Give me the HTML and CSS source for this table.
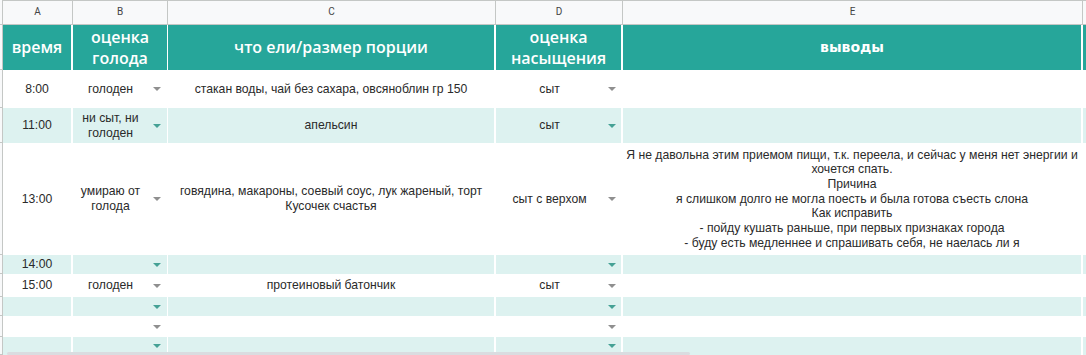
FILE: index.html
```html
<!DOCTYPE html>
<html lang="ru">
<head>
<meta charset="utf-8">
<title>Дневник питания</title>
<link rel="stylesheet" href="styles.css">
</head>
<body>
<div class="sheet">
  <div class="grid">
    <div class="row">
      <div class="rh"></div>
      <div class="ch">A</div>
      <div class="ch">B</div>
      <div class="ch">C</div>
      <div class="ch">D</div>
      <div class="ch">E</div>
      <div class="ch ch-f"></div>
    </div>
    <div class="row">
      <div class="rh"></div>
      <div class="hd">время</div>
      <div class="hd hd-b">оценка<br>голода</div>
      <div class="hd">что ели/размер порции</div>
      <div class="hd">оценка<br>насыщения</div>
      <div class="hd hd-e">выводы</div>
      <div class="hd hd-f"></div>
    </div>

    <div class="row">
      <div class="rh"></div>
      <div class="c">8:00</div>
      <div class="c c-b"><span class="t">голоден</span><span class="dd"><svg viewBox="0 0 8 4"><path d="M0 0H8L4 4Z"/></svg></span></div>
      <div class="c">стакан воды, чай без сахара, овсяноблин гр 150</div>
      <div class="c c-d"><span class="t">сыт</span><span class="dd"><svg viewBox="0 0 8 4"><path d="M0 0H8L4 4Z"/></svg></span></div>
      <div class="c"></div>
      <div class="c c-f"></div>
    </div>

    <div class="row alt">
      <div class="rh"></div>
      <div class="c">11:00</div>
      <div class="c c-b"><span class="t">ни сыт, ни голоден</span><span class="dd"><svg viewBox="0 0 8 4"><path d="M0 0H8L4 4Z"/></svg></span></div>
      <div class="c">апельсин</div>
      <div class="c c-d"><span class="t">сыт</span><span class="dd"><svg viewBox="0 0 8 4"><path d="M0 0H8L4 4Z"/></svg></span></div>
      <div class="c"></div>
      <div class="c c-f"></div>
    </div>

    <div class="row">
      <div class="rh"></div>
      <div class="c">13:00</div>
      <div class="c c-b"><span class="t">умираю от голода</span><span class="dd"><svg viewBox="0 0 8 4"><path d="M0 0H8L4 4Z"/></svg></span></div>
      <div class="c">говядина, макароны, соевый соус, лук жареный, торт<br>Кусочек счастья</div>
      <div class="c c-d"><span class="t">сыт с верхом</span><span class="dd"><svg viewBox="0 0 8 4"><path d="M0 0H8L4 4Z"/></svg></span></div>
      <div class="c c-e">
        <span class="ln">Я не давольна этим приемом пищи, т.к. переела, и сейчас у меня нет энергии и</span>
        <span class="ln">хочется спать.</span>
        <span class="ln">Причина</span>
        <span class="ln">я слишком долго не могла поесть и была готова съесть слона</span>
        <span class="ln">Как исправить</span>
        <span class="ln">- пойду кушать раньше, при первых признаках города</span>
        <span class="ln">- буду есть медленнее и спрашивать себя, не наелась ли я</span>
      </div>
      <div class="c c-f"></div>
    </div>

    <div class="row alt">
      <div class="rh"></div>
      <div class="c">14:00</div>
      <div class="c c-b"><span class="t"></span><span class="dd"><svg viewBox="0 0 8 4"><path d="M0 0H8L4 4Z"/></svg></span></div>
      <div class="c"></div>
      <div class="c c-d"><span class="t"></span><span class="dd"><svg viewBox="0 0 8 4"><path d="M0 0H8L4 4Z"/></svg></span></div>
      <div class="c"></div>
      <div class="c c-f"></div>
    </div>

    <div class="row">
      <div class="rh"></div>
      <div class="c">15:00</div>
      <div class="c c-b"><span class="t">голоден</span><span class="dd"><svg viewBox="0 0 8 4"><path d="M0 0H8L4 4Z"/></svg></span></div>
      <div class="c">протеиновый батончик</div>
      <div class="c c-d"><span class="t">сыт</span><span class="dd"><svg viewBox="0 0 8 4"><path d="M0 0H8L4 4Z"/></svg></span></div>
      <div class="c"></div>
      <div class="c c-f"></div>
    </div>

    <div class="row alt">
      <div class="rh"></div>
      <div class="c"></div>
      <div class="c c-b"><span class="t"></span><span class="dd"><svg viewBox="0 0 8 4"><path d="M0 0H8L4 4Z"/></svg></span></div>
      <div class="c"></div>
      <div class="c c-d"><span class="t"></span><span class="dd"><svg viewBox="0 0 8 4"><path d="M0 0H8L4 4Z"/></svg></span></div>
      <div class="c"></div>
      <div class="c c-f"></div>
    </div>

    <div class="row">
      <div class="rh"></div>
      <div class="c"></div>
      <div class="c c-b"><span class="t"></span><span class="dd"><svg viewBox="0 0 8 4"><path d="M0 0H8L4 4Z"/></svg></span></div>
      <div class="c"></div>
      <div class="c c-d"><span class="t"></span><span class="dd"><svg viewBox="0 0 8 4"><path d="M0 0H8L4 4Z"/></svg></span></div>
      <div class="c"></div>
      <div class="c c-f"></div>
    </div>

    <div class="row alt">
      <div class="rh"></div>
      <div class="c"></div>
      <div class="c c-b"><span class="t"></span><span class="dd"><svg viewBox="0 0 8 4"><path d="M0 0H8L4 4Z"/></svg></span></div>
      <div class="c"></div>
      <div class="c c-d"><span class="t"></span><span class="dd"><svg viewBox="0 0 8 4"><path d="M0 0H8L4 4Z"/></svg></span></div>
      <div class="c"></div>
      <div class="c c-f"></div>
    </div>
  </div>
  <div class="hscroll"></div>
</div>
</body>
</html>
```
FILE: styles.css
```css
html, body {
  margin: 0;
  padding: 0;
  background: #fff;
  overflow: hidden;
}

.sheet {
  position: relative;
  width: 1086px;
  height: 355px;
  overflow: hidden;
}

.grid {
  display: grid;
  grid-template-columns: 3px 70px 95px 328px 127px 460px 3px;
  grid-template-rows: 25px 45px 38px 35px 112px 19px 23px 19px 21px 18px;
  font-family: "Liberation Sans", Arial, sans-serif;
  font-size: 12.2px;
  line-height: 14.7px;
  color: #2a2a2a;
}

.row {
  display: contents;
}

.grid > .row > div {
  box-sizing: border-box;
  min-width: 0;
  overflow: hidden;
}

.rh {
  background: #f8f9fa;
  border-right: 1px solid #c4c7c5;
  border-bottom: 1px solid #c4c7c5;
}

.ch {
  background: #f8f9fa;
  border-top: 1px solid #c4c7c5;
  border-right: 1px solid #c4c7c5;
  border-bottom: 1px solid #c4c7c5;
  display: flex;
  align-items: center;
  justify-content: center;
  font-family: Roboto, "Liberation Sans", sans-serif;
  font-size: 10px;
  color: #444;
}

.ch-f {
  border-right: none;
}

.hd {
  background: #26a69a;
  color: #fff;
  border-right: 2px solid #fff;
  display: flex;
  align-items: center;
  justify-content: center;
  text-align: center;
  font-family: "Open Sans", "Noto Sans", sans-serif;
  font-weight: 600;
  font-size: 16px;
  line-height: 21px;
}

.hd-b {
  border-right-width: 1px;
}

.hd-e {
  font-family: "DejaVu Sans", sans-serif;
  font-weight: 700;
  font-size: 14px;
}

.hd-f {
  border-right: none;
}

.c {
  background: #fff;
  border-right: 2px solid #fff;
  display: flex;
  align-items: center;
  justify-content: center;
  text-align: center;
}

.c-b {
  border-right-width: 1px;
}

.c-f {
  border-right: none;
}

.alt > .c {
  background: #ddf2f0;
}

.c-b, .c-d {
  justify-content: flex-start;
}

.c-b .t, .c-d .t {
  flex: 1;
  min-width: 0;
  text-align: center;
}

.c-b .dd {
  margin: 0 6px 0 5px;
}

.c-d .dd {
  margin: 0 5px 0 5px;
}

.dd {
  flex: none;
  display: flex;
  width: 8px;
  height: 4px;
}

.dd svg {
  width: 8px;
  height: 4px;
  fill: #8f8f8f;
}

.alt .dd svg {
  fill: #45a195;
}

.c-e {
  flex-direction: column;
}

.ln {
  display: block;
  white-space: nowrap;
}

.hscroll {
  position: absolute;
  left: 7px;
  top: 352px;
  width: 683px;
  height: 3px;
  background: #dadce0;
  border-radius: 2px;
}
```
